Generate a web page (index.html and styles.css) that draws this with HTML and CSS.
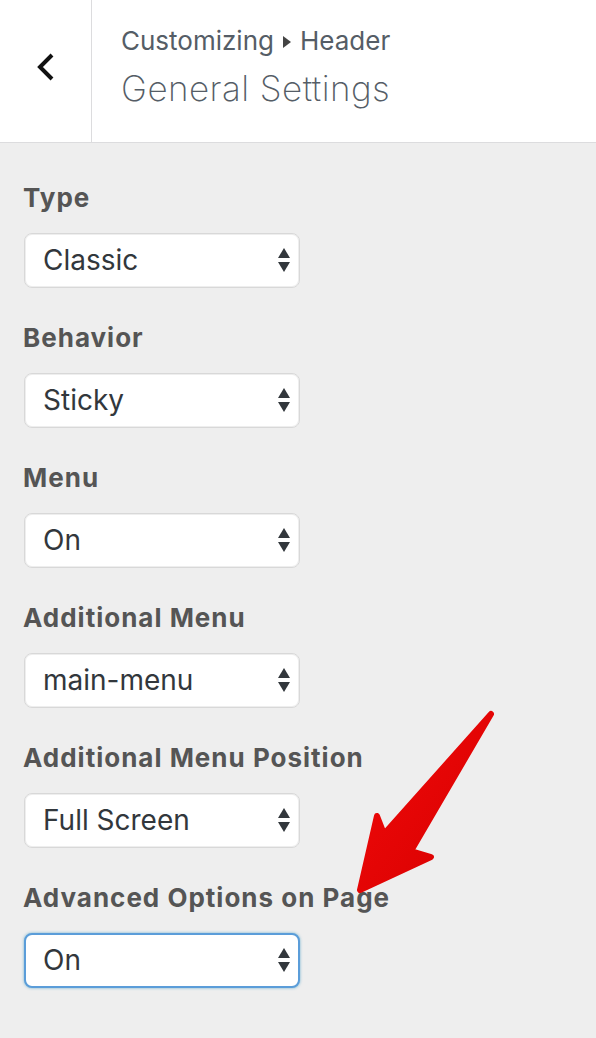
FILE: index.html
```html
<!DOCTYPE html>
<html lang="en">
<head>
<meta charset="utf-8">
<title>General Settings</title>
<link rel="stylesheet" href="styles.css">
</head>
<body>
<div class="panel">
  <header class="head">
    <div class="back">
      <svg width="24" height="32" viewBox="0 0 24 32"><polyline points="18,4 6,16 18,28" fill="none" stroke="#111" stroke-width="4" stroke-linejoin="miter"/></svg>
    </div>
    <div class="titles">
      <div class="crumb">Customizing <svg class="tri" width="10" height="14" viewBox="0 0 10 14"><polygon points="1,1 9,7 1,13" fill="#444"/></svg> Header</div>
      <h1 class="title">General Settings</h1>
    </div>
  </header>
  <main class="fields">
    <div class="field">
      <label class="label">Type</label>
      <div class="select"><span>Classic</span><svg class="arr" width="14" height="26" viewBox="0 0 14 26"><polygon points="7,1 13,11 1,11" fill="#32373c"/><polygon points="1,15 13,15 7,25" fill="#32373c"/></svg></div>
    </div>
    <div class="field">
      <label class="label">Behavior</label>
      <div class="select"><span>Sticky</span><svg class="arr" width="14" height="26" viewBox="0 0 14 26"><polygon points="7,1 13,11 1,11" fill="#32373c"/><polygon points="1,15 13,15 7,25" fill="#32373c"/></svg></div>
    </div>
    <div class="field">
      <label class="label">Menu</label>
      <div class="select"><span>On</span><svg class="arr" width="14" height="26" viewBox="0 0 14 26"><polygon points="7,1 13,11 1,11" fill="#32373c"/><polygon points="1,15 13,15 7,25" fill="#32373c"/></svg></div>
    </div>
    <div class="field">
      <label class="label">Additional Menu</label>
      <div class="select"><span>main-menu</span><svg class="arr" width="14" height="26" viewBox="0 0 14 26"><polygon points="7,1 13,11 1,11" fill="#32373c"/><polygon points="1,15 13,15 7,25" fill="#32373c"/></svg></div>
    </div>
    <div class="field">
      <label class="label">Additional Menu Position</label>
      <div class="select"><span>Full Screen</span><svg class="arr" width="14" height="26" viewBox="0 0 14 26"><polygon points="7,1 13,11 1,11" fill="#32373c"/><polygon points="1,15 13,15 7,25" fill="#32373c"/></svg></div>
    </div>
    <div class="field">
      <label class="label">Advanced Options on Page</label>
      <div class="select focus"><span>On</span><svg class="arr" width="14" height="26" viewBox="0 0 14 26"><polygon points="7,1 13,11 1,11" fill="#32373c"/><polygon points="1,15 13,15 7,25" fill="#32373c"/></svg></div>
    </div>
  </main>
  <svg class="pointer" width="170" height="200" viewBox="340 700 170 200">
    <defs>
      <linearGradient id="rg" x1="0" y1="0" x2="1" y2="1">
        <stop offset="0" stop-color="#f20a0a"/>
        <stop offset="1" stop-color="#d60000"/>
      </linearGradient>
    </defs>
    <polygon points="491,714 411,851 431,857 360,890 377,816 384,834" fill="url(#rg)" stroke="url(#rg)" stroke-width="6" stroke-linejoin="round"/>
  </svg>
</div>
</body>
</html>
```

FILE: styles.css
```css
html, body {
  margin: 0;
  padding: 0;
  background: #eeeeee;
}
body {
  font-family: Inter, "Liberation Sans", Arial, sans-serif;
  width: 596px;
  height: 1038px;
  overflow: hidden;
}
.panel {
  position: relative;
  height: 1038px;
}
.head {
  display: flex;
  height: 142px;
  background: #ffffff;
  border-bottom: 1px solid #dcdcde;
}
.back {
  width: 92px;
  border-right: 1px solid #dcdcde;
  display: flex;
  align-items: center;
  justify-content: center;
  padding-bottom: 8px;
  box-sizing: border-box;
}
.titles {
  padding: 24px 0 0 29px;
}
.crumb {
  font-size: 26px;
  color: #555d66;
  line-height: 34px;
  display: flex;
  align-items: center;
  gap: 8px;
}
.crumb .tri {
  margin-top: 1px;
}
.title {
  margin: 8px 0 0 0;
  font-size: 35px;
  font-weight: 200;
  color: #555d66;
  line-height: 44px;
  letter-spacing: 0.45px;
}
.fields {
  padding: 39px 0 0 23px;
}
.field {
  margin-bottom: 34px;
}
.label {
  display: block;
  font-size: 26px;
  font-weight: 700;
  color: #555;
  line-height: 32px;
  letter-spacing: 1px;
  margin-bottom: 19px;
}
.select {
  margin-left: 1px;
  width: 276px;
  height: 55px;
  box-sizing: border-box;
  border: 1px solid #d8d8d8;
  border-radius: 8px;
  background: #ffffff;
  box-shadow: inset 0 0 0 1px #eeeeee;
  display: flex;
  align-items: center;
  justify-content: space-between;
  padding: 0 8px 2px 18px;
  font-size: 28px;
  color: #32373c;
}
.select.focus {
  border: 2px solid #5b9dd9;
  padding-left: 17px;
  padding-right: 7px;
  box-shadow: 0 0 3px rgba(30,140,190,0.6);
}
.pointer {
  position: absolute;
  left: 340px;
  top: 700px;
}
```
